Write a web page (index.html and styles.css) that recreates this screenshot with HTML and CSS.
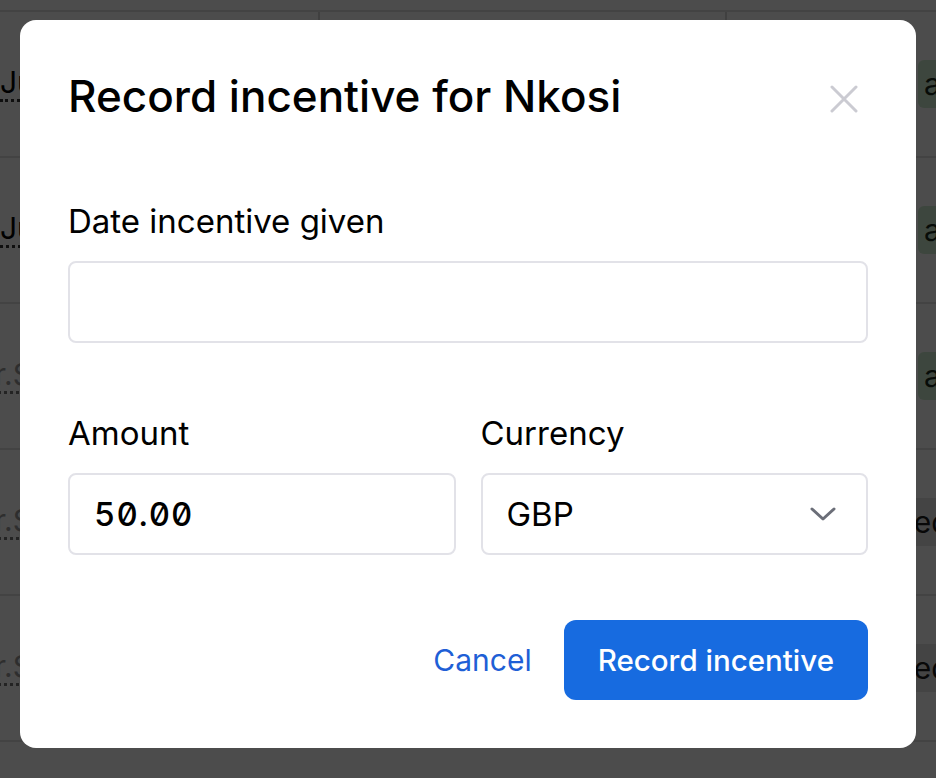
FILE: index.html
```html
<!DOCTYPE html>
<html lang="en">
<head>
<meta charset="utf-8">
<title>Record incentive</title>
<link rel="stylesheet" href="styles.css">
</head>
<body>
<div class="page">
  <div class="table">
    <div class="head-row"></div>
    <div class="row">
      <div class="cell c1"><span class="dotted">Jun 12</span></div>
      <div class="cell c2"></div>
      <div class="cell c3"><span class="badge green">approved</span></div>
    </div>
    <div class="row">
      <div class="cell c1"><span class="dotted">Jun 14</span></div>
      <div class="cell c2"></div>
      <div class="cell c3"><span class="badge green">approved</span></div>
    </div>
    <div class="row">
      <div class="cell c1"><span class="dotted muted shifted">Dr.Smith</span></div>
      <div class="cell c2"></div>
      <div class="cell c3"><span class="badge green">approved</span></div>
    </div>
    <div class="row">
      <div class="cell c1"><span class="dotted muted shifted">Dr.Smith</span></div>
      <div class="cell c2"></div>
      <div class="cell c3"><span class="badge gray">Redeemed</span></div>
    </div>
    <div class="row">
      <div class="cell c1"><span class="dotted muted shifted">Dr.Smith</span></div>
      <div class="cell c2"></div>
      <div class="cell c3"><span class="badge gray">Redeemed</span></div>
    </div>
    <div class="row"></div>
  </div>
</div>

<div class="overlay">
  <div class="modal" role="dialog" aria-labelledby="modal-title">
    <div class="modal-header">
      <h1 id="modal-title" class="modal-title">Record incentive for Nkosi</h1>
      <button class="close" aria-label="Close">
        <svg width="28" height="28" viewBox="0 0 28 28" fill="none" stroke="currentColor" stroke-width="3" stroke-linecap="round">
          <path d="M2 2 L26 26 M26 2 L2 26"/>
        </svg>
      </button>
    </div>

    <div class="field">
      <label class="label" for="date">Date incentive given</label>
      <div class="input" id="date"></div>
    </div>

    <div class="field-row">
      <div class="field">
        <label class="label">Amount</label>
        <div class="input amount">50.00</div>
      </div>
      <div class="field">
        <label class="label">Currency</label>
        <div class="input select">
          <span>GBP</span>
          <svg class="chevron" width="26" height="14" viewBox="0 0 26 14" fill="none" stroke="currentColor" stroke-width="3" stroke-linecap="round" stroke-linejoin="round">
            <path d="M2 2 L13 12 L24 2"/>
          </svg>
        </div>
      </div>
    </div>

    <div class="actions">
      <a class="cancel" href="#">Cancel</a>
      <button class="primary">Record incentive</button>
    </div>
  </div>
</div>
</body>
</html>
```

FILE: styles.css
```css
* { box-sizing: border-box; }

html, body {
  margin: 0;
  padding: 0;
  width: 936px;
  height: 778px;
  overflow: hidden;
}

body {
  font-family: Inter, "Noto Sans", sans-serif;
  background: #ffffff;
  color: #000;
}

/* background table */
.page {
  width: 936px;
  height: 778px;
  overflow: hidden;
  background: #f2f2f2;
}

.table {
  display: flex;
  flex-direction: column;
  background: #ffffff;
}

.head-row {
  height: 12px;
  border-bottom: 2px solid #e0e0e0;
}

.row {
  display: grid;
  grid-template-columns: 318px 407px 211px;
  height: 146px;
  border-bottom: 2px solid #e0e0e0;
}

.cell {
  display: flex;
  align-items: center;
  overflow: hidden;
  white-space: nowrap;
  font-size: 30px;
}

.c2, .c3 {
  border-left: 2px solid #d8d8d8;
}

.c3 { padding-left: 191px; }

.dotted {
  border-bottom: 3px dotted #333;
  line-height: 1.1;
}

.dotted.muted {
  color: #9a9a9a;
  border-bottom-color: #777;
}

.dotted.shifted {
  margin-left: -27px;
}

.badge {
  display: inline-block;
  height: 48px;
  line-height: 48px;
  padding: 0 6px;
  border-radius: 6px;
  font-size: 30px;
  color: #1a2a1d;
}

.badge.green { background: #cdeccf; }
.badge.gray { background: #e4e4e4; color: #1b1b1b; margin-left: -29px; }

/* overlay + modal */
.overlay {
  position: fixed;
  inset: 0;
  background: rgba(0, 0, 0, 0.7);
  display: flex;
  justify-content: center;
  align-items: flex-start;
  padding: 20px;
}

.modal {
  width: 896px;
  background: #fff;
  border-radius: 16px;
  padding: 48px;
  display: flex;
  flex-direction: column;
}

.modal-header {
  display: flex;
  align-items: center;
  justify-content: space-between;
  margin-bottom: 73px;
}

.modal-title {
  margin: 0;
  font-size: 44px;
  line-height: 56px;
  font-weight: 500;
  color: #000;
}

.close {
  border: 0;
  background: none;
  padding: 0;
  margin-right: 10px;
  margin-top: 6px;
  width: 28px;
  height: 28px;
  color: #cbcbd2;
  display: flex;
}

.field {
  display: flex;
  flex-direction: column;
  flex: 1;
}

.label {
  font-size: 33px;
  line-height: 48px;
  margin-bottom: 16px;
  color: #000;
}

.input {
  height: 82px;
  border: 2px solid #e2e2e8;
  border-radius: 8px;
  padding: 0 24px;
  display: flex;
  align-items: center;
  font-size: 33px;
  color: #000;
}

.amount {
  font-size: 33px;
  font-weight: 500;
  font-variant-numeric: tabular-nums slashed-zero;
  font-feature-settings: "tnum" 1, "zero" 1;
  letter-spacing: 1px;
}

.select {
  justify-content: space-between;
  padding-right: 30px;
}

.chevron { color: #6b6e78; }

.field-row {
  display: flex;
  gap: 25px;
  margin-top: 66px;
}

.actions {
  display: flex;
  justify-content: flex-end;
  align-items: center;
  gap: 32px;
  margin-top: 65px;
}

.cancel {
  color: #1f5fd6;
  text-decoration: none;
  font-size: 30px;
}

.primary {
  height: 80px;
  padding: 0 34px;
  border: 0;
  border-radius: 12px;
  background: #176be0;
  color: #fff;
  font-family: inherit;
  font-size: 29.5px;
  font-weight: 500;
}
```
